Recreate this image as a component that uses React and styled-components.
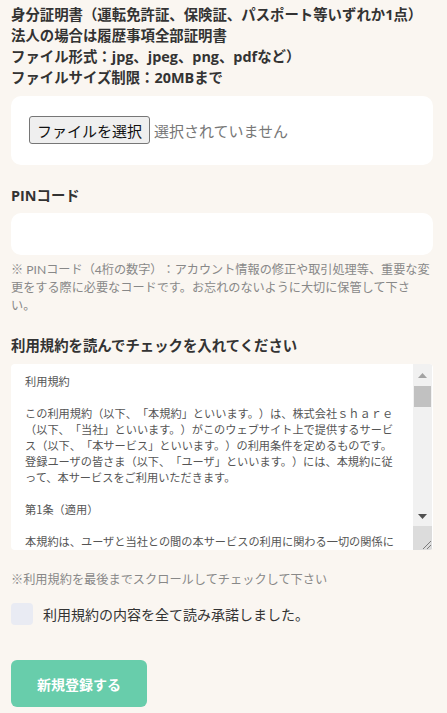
import { useRef, useState } from "react";
import styled, { createGlobalStyle } from "styled-components";

const GlobalStyle = createGlobalStyle`
    html, body {
        margin: 0;
        background-color: #faf6f1;
    }
    body {
        font-family: "Lato", "Noto Sans CJK JP", sans-serif;
        color: #333;
        text-spacing-trim: space-all;
    }
`;

const Page = styled.main`
    padding: 4px 14px 40px 11px;
    display: flex;
    flex-direction: column;
`;

const Title = styled.p`
    margin: 0;
    font-family: "Open Sans", "Noto Sans CJK JP", sans-serif;
    font-size: 14.4px;
    font-weight: 700;
    line-height: ${(props) => props.lh || 21}px;
    margin-top: ${(props) => props.top || 0}px;
`;

const FileBox = styled.label`
    display: flex;
    align-items: center;
    gap: 4px;
    margin-top: 8px;
    padding: 20px 18px 21px;
    background-color: #fff;
    border-radius: 10px;
    cursor: pointer;

    input {
        display: none;
    }
`;

const FileButton = styled.span`
    display: inline-flex;
    align-items: center;
    height: 28px;
    box-sizing: border-box;
    padding: 0 7px;
    border: 1px solid #767676;
    border-radius: 3px;
    background-color: #efefef;
    color: #111;
    font-size: 15px;
`;

const FileName = styled.span`
    font-size: 15px;
    color: #777;
`;

const TextInput = styled.input`
    margin-top: 7px;
    height: 42px;
    box-sizing: border-box;
    border: none;
    border-radius: 10px;
    background-color: #fff;
    padding: 0 14px;
    font-size: 14px;
    outline: none;
`;

const Note = styled.p`
    margin: ${(props) => props.top || 6}px 0 0;
    font-size: ${(props) => props.size || 12.15}px;
    line-height: 18px;
    color: #888;
`;

const TermsBox = styled.div`
    display: flex;
    margin-top: 7px;
    height: 186px;
    background-color: #fff;
    border-radius: 4px;
    overflow: hidden;
`;

const Terms = styled.textarea`
    flex: 1;
    min-width: 0;
    border: none;
    background: transparent;
    padding: 9px 11px 9px 14px;
    font-family: "Noto Sans CJK JP", sans-serif;
    font-size: 11.2px;
    line-height: 16px;
    color: #555;
    outline: none;
    resize: none;
    scrollbar-width: none;
    text-spacing-trim: space-all;

    &::-webkit-scrollbar {
        display: none;
    }
`;

const Rail = styled.div`
    width: 19px;
    margin-right: 1px;
    display: flex;
    flex-direction: column;
    background-color: #f1f1f1;
`;

const RailButton = styled.div`
    height: ${(props) => props.h}px;
    display: flex;
    align-items: center;
    justify-content: center;
    flex-shrink: 0;
`;

const Track = styled.div`
    flex: 1;
    position: relative;
`;

const Thumb = styled.div`
    position: absolute;
    left: 1px;
    right: 1px;
    height: 21px;
    background-color: #c1c1c1;
`;

const Grip = styled.div`
    height: 24px;
    flex-shrink: 0;
    background-color: #dcdcdc;
    display: flex;
    align-items: flex-end;
    justify-content: flex-end;
`;

const CheckRow = styled.label`
    display: flex;
    align-items: center;
    gap: 10px;
    margin-top: 14px;
    font-size: 14px;
    color: #333;
    cursor: pointer;
`;

const CheckBox = styled.span`
    width: 22px;
    height: 22px;
    border-radius: 4px;
    background-color: ${(props) => (props.checked ? "#68cdab" : "#e9ebf3")};
    flex-shrink: 0;
`;

const Submit = styled.button`
    align-self: flex-start;
    margin-top: 35px;
    width: 136px;
    height: 47px;
    border: none;
    border-radius: 6px;
    background-color: #68cdab;
    color: #fff;
    font-family: "Open Sans", "Noto Sans CJK JP", sans-serif;
    font-size: 14px;
    font-weight: 700;
    cursor: pointer;
`;

const termsText = `利用規約

この利用規約（以下、「本規約」といいます。）は、株式会社ｓｈａｒｅ（以下、「当社」といいます。）がこのウェブサイト上で提供するサービス（以下、「本サービス」といいます。）の利用条件を定めるものです。登録ユーザの皆さま（以下、「ユーザ」といいます。）には、本規約に従って、本サービスをご利用いただきます。

第1条（適用）

本規約は、ユーザと当社との間の本サービスの利用に関わる一切の関係に適用されるものとします。

当社は本サービスに関し、本規約のほか、ご利用にあたってのルール等、各種の定め（以下、「個別規定」といいます。）をすることがあります。これら個別規定はその名称のいかんに関わらず、本規約の一部を構成するものとします。

本規約の規定が前条の個別規定の規定と矛盾する場合には、個別規定において特段の定めなき限り、個別規定の規定が優先されるものとします。

第2条（利用登録）

本サービスにおいては、登録希望者が本規約に同意の上、当社の定める方法によって利用登録を申請し、当社がこれを承認することによって、利用登録が完了するものとします。

当社は、利用登録の申請者に以下の事由があると判断した場合、利用登録の申請を承認しないことがあり、その理由については一切の開示義務を負わないものとします。

利用登録の申請に際して虚偽の事項を届け出た場合
本規約に違反したことがある者からの申請である場合
その他、当社が利用登録を相当でないと判断した場合

第3条（ユーザIDおよびパスワードの管理）

ユーザは、自己の責任において、本サービスのユーザIDおよびパスワードを適切に管理するものとします。

ユーザは、いかなる場合にも、ユーザIDおよびパスワードを第三者に譲渡または貸与し、もしくは第三者と共用することはできません。`;

const UpArrow = ({ color }) => (
    <svg width="9" height="5" viewBox="0 0 9 5">
        <path d="M4.5 0L9 5H0z" fill={color} />
    </svg>
);

const DownArrow = ({ color }) => (
    <svg width="9" height="5" viewBox="0 0 9 5">
        <path d="M0 0h9L4.5 5z" fill={color} />
    </svg>
);

const App = () => {

    const [agreed, setAgreed] = useState(false);
    const [scroll, setScroll] = useState(0);
    const areaRef = useRef(null);
    const trackH = 120;

    const handleScroll = (e) => {
        const el = e.target;
        const max = el.scrollHeight - el.clientHeight;
        setScroll(max > 0 ? el.scrollTop / max : 0);
    };

    return (
        <>
            <GlobalStyle />
            <Page>
                <div>
                    <Title>身分証明書（運転免許証、保険証、パスポート等いずれか1点）</Title>
                    <Title>法人の場合は履歴事項全部証明書</Title>
                    <Title>ファイル形式：jpg、jpeg、png、pdfなど）</Title>
                    <Title>ファイルサイズ制限：20MBまで</Title>
                </div>
                <FileBox>
                    <input type="file" />
                    <FileButton>ファイルを選択</FileButton>
                    <FileName>選択されていません</FileName>
                </FileBox>

                <Title top={20}>PINコード</Title>
                <TextInput type="password" inputMode="numeric" maxLength={4} />
                <Note>※ PINコード（4桁の数字）：アカウント情報の修正や取引処理等、重要な変更をする際に必要なコードです。お忘れのないように大切に保管して下さい。</Note>

                <Title top={20} lh={22}>利用規約を読んでチェックを入れてください</Title>
                <TermsBox>
                    <Terms ref={areaRef} readOnly defaultValue={termsText} onScroll={handleScroll} />
                    <Rail>
                        <RailButton h={22}><UpArrow color={scroll > 0 ? "#505050" : "#a3a3a3"} /></RailButton>
                        <Track>
                            <Thumb style={{ top: Math.round(scroll * (trackH - 21)) }} />
                        </Track>
                        <RailButton h={20}><DownArrow color={scroll < 1 ? "#505050" : "#a3a3a3"} /></RailButton>
                        <Grip>
                            <svg width="12" height="12" viewBox="0 0 12 12">
                                <path d="M11 3L3 11M11 7L7 11" stroke="#7a7a7a" strokeWidth="1" />
                            </svg>
                        </Grip>
                    </Rail>
                </TermsBox>
                <Note top={21} size={12.2}>※利用規約を最後までスクロールしてチェックして下さい</Note>

                <CheckRow onClick={() => setAgreed(!agreed)}>
                    <CheckBox checked={agreed} />
                    利用規約の内容を全て読み承諾しました。
                </CheckRow>

                <Submit type="button">新規登録する</Submit>
            </Page>
        </>
    );

};

export default App;
